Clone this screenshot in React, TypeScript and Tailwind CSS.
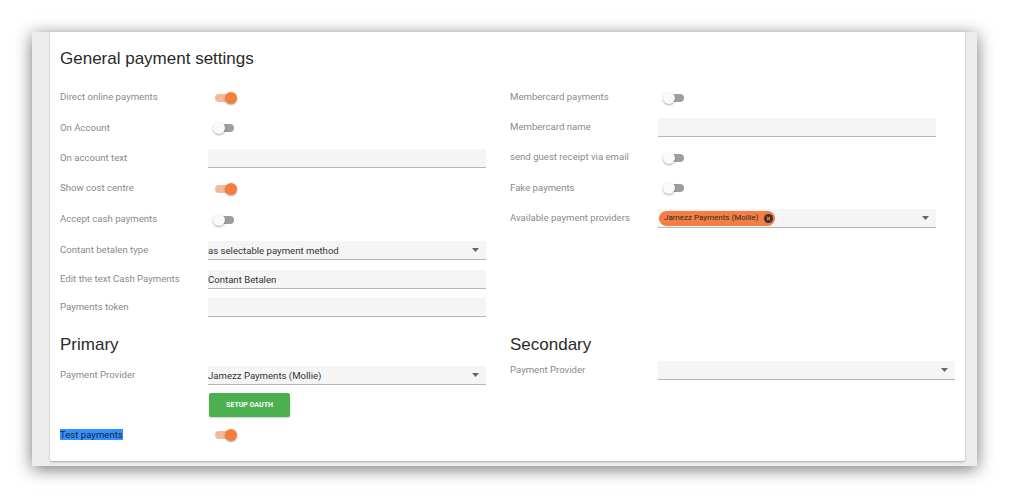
import React from "react";

type ToggleProps = { on?: boolean };

const Toggle: React.FC<ToggleProps> = ({ on }) => (
  <div className="relative ml-[5px] h-[12px] w-[24px]">
    <div
      className={`absolute left-[2px] top-[2px] h-[8px] w-[19px] rounded-full ${
        on ? "bg-[#f9b896]" : "bg-[#9e9e9e]"
      }`}
    />
    <div
      className={`absolute top-0 h-[12px] w-[12px] rounded-full shadow-[0_1px_2px_rgba(0,0,0,0.35)] ${
        on ? "left-[12px] bg-[#f47e3c]" : "left-0 bg-[#fafafa]"
      }`}
    />
  </div>
);

const Caret = () => (
  <svg width="8" height="4" viewBox="0 0 8 4" className="mr-[6px] shrink-0">
    <path d="M0 0h7L3.5 4z" fill="#666" />
  </svg>
);

const TextInput = ({ value = "", w = "w-[278px]" }: { value?: string; w?: string }) => (
  <div
    className={`${w} flex h-[19px] items-center border-b border-[#b5b5b5] bg-[#f5f5f5] pt-[2px] text-[9.6px] text-[#333]`}
  >
    {value}
  </div>
);

const Select = ({ value = "", w = "w-[278px]" }: { value?: string; w?: string }) => (
  <div
    className={`${w} flex h-[19px] items-center justify-between border-b border-[#b5b5b5] bg-[#f5f5f5] text-[9.6px] text-[#333]`}
  >
    <span className="pt-[2px]">{value}</span>
    <Caret />
  </div>
);

const Row = ({
  label,
  h,
  children,
}: {
  label: string;
  h: string;
  children?: React.ReactNode;
}) => (
  <div className={`flex items-center pt-[1px] ${h}`}>
    <div className="w-[148px] shrink-0 text-[9.6px] text-[#8a8a8a]">{label}</div>
    {children}
  </div>
);

const headingFont = { fontFamily: "'Liberation Sans', Arial, sans-serif" };

export default function App() {
  return (
    <div
      className="min-h-[499px] w-full bg-white pl-[32px] pt-[32px]"
      style={{ fontFamily: "Roboto, 'Liberation Sans', sans-serif" }}
    >
      {/* screenshot frame */}
      <div className="flex h-[434px] w-[945px] bg-[#ededed] pl-[18px] pr-[12px] pb-[5px] shadow-[0_3px_16px_rgba(0,0,0,0.55)]">
        <div className="flex h-full w-[915px] flex-col rounded-b-[2px] bg-white pl-[10px] pt-[15px] shadow-[0_1px_2px_rgba(0,0,0,0.3)]">
          <h1 className="h-[24px] text-[17px] leading-[24px] text-[#2a2a2a]" style={headingFont}>
            General payment settings
          </h1>

          <div className="mt-[11px] flex">
            {/* left column */}
            <div className="flex w-[450px] flex-col">
              <Row label="Direct online payments" h="h-[30px]">
                <Toggle on />
              </Row>
              <Row label="On Account" h="h-[31px]">
                <Toggle />
              </Row>
              <Row label="On account text" h="h-[30px]">
                <TextInput />
              </Row>
              <Row label="Show cost centre" h="h-[30px]">
                <Toggle on />
              </Row>
              <Row label="Accept cash payments" h="h-[32px]">
                <Toggle />
              </Row>
              <Row label="Contant betalen type" h="h-[30px]">
                <Select value="as selectable payment method" />
              </Row>
              <Row label="Edit the text Cash Payments" h="h-[28px]">
                <TextInput value="Contant Betalen" />
              </Row>
              <Row label="Payments token" h="h-[28px]">
                <TextInput />
              </Row>
            </div>

            {/* right column */}
            <div className="flex flex-col">
              <Row label="Membercard payments" h="h-[30px]">
                <Toggle />
              </Row>
              <Row label="Membercard name" h="h-[30px]">
                <TextInput />
              </Row>
              <Row label="send guest receipt via email" h="h-[30px]">
                <Toggle />
              </Row>
              <Row label="Fake payments" h="h-[31px]">
                <Toggle />
              </Row>
              <Row label="Available payment providers" h="h-[30px]">
                <div className="flex h-[19px] w-[278px] items-center justify-between border-b border-[#b5b5b5] bg-[#f5f5f5]">
                  <span className="ml-[1px] flex h-[15px] items-center gap-[5px] whitespace-nowrap rounded-full bg-[#f47f44] pl-[5px] pr-[2px] text-[8px] text-[#2a2a2a]">
                    Jamezz Payments (Mollie)
                    <svg width="9" height="9" viewBox="0 0 10 10">
                      <circle cx="5" cy="5" r="5" fill="#333" />
                      <path d="M3.2 3.2l3.6 3.6M6.8 3.2l-3.6 3.6" stroke="#f47f44" strokeWidth="1.4" />
                    </svg>
                  </span>
                  <Caret />
                </div>
              </Row>
            </div>
          </div>

          <div className="mt-[12px] flex">
            {/* primary */}
            <div className="flex w-[450px] flex-col">
              <h2 className="h-[24px] text-[17px] leading-[24px] text-[#2a2a2a]" style={headingFont}>
                Primary
              </h2>
              <Row label="Payment Provider" h="h-[36px]">
                <Select value="Jamezz Payments (Mollie)" />
              </Row>
              <div className="ml-[149px]">
                <button className="flex h-[24px] w-[81px] items-center justify-center rounded-[2px] bg-[#4caf50] text-[7px] font-bold text-white shadow-[0_1px_2px_rgba(0,0,0,0.2)]">
                  SETUP OAUTH
                </button>
              </div>
              <div className="mt-[6px] flex h-[24px] items-center">
                <div className="w-[148px] shrink-0 text-[9.6px]">
                  <span className="bg-[#3390ff] text-[#1a2a3a]">Test payments</span>
                </div>
                <Toggle on />
              </div>
            </div>

            {/* secondary */}
            <div className="flex flex-col">
              <h2 className="h-[24px] text-[17px] leading-[24px] text-[#2a2a2a]" style={headingFont}>
                Secondary
              </h2>
              <Row label="Payment Provider" h="h-[26px]">
                <Select w="w-[297px]" />
              </Row>
            </div>
          </div>
        </div>
      </div>
    </div>
  );
}
